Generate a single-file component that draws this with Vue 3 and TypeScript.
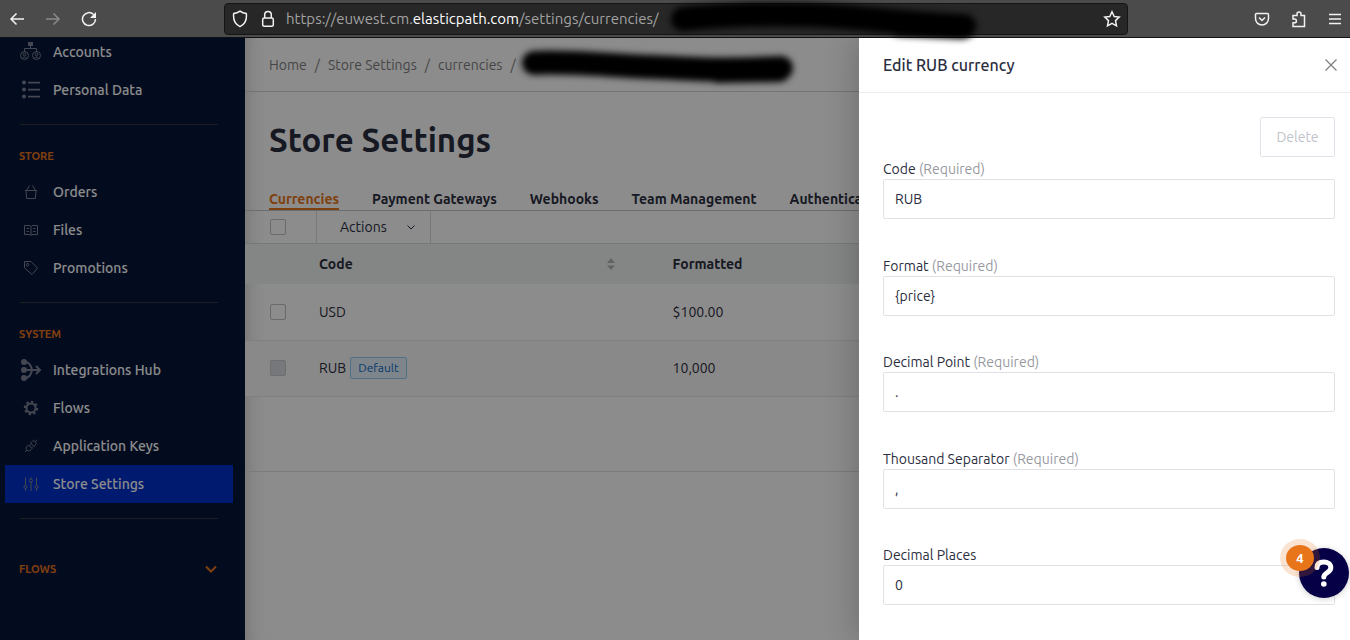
<script setup lang="ts">
import { ref } from 'vue'

interface NavItem { label: string; icon: string; active?: boolean }
interface NavGroup { title: string; items: NavItem[] }
interface Field { id: string; label: string; required: boolean; value: string }
interface Row { code: string; formatted: string; isDefault: boolean }

const groups: NavGroup[] = [
  { title: '', items: [
    { label: 'Accounts', icon: 'accounts' },
    { label: 'Personal Data', icon: 'list' },
  ] },
  { title: 'STORE', items: [
    { label: 'Orders', icon: 'basket' },
    { label: 'Files', icon: 'book' },
    { label: 'Promotions', icon: 'tag' },
  ] },
  { title: 'SYSTEM', items: [
    { label: 'Integrations Hub', icon: 'hub' },
    { label: 'Flows', icon: 'gear' },
    { label: 'Application Keys', icon: 'plug' },
    { label: 'Store Settings', icon: 'sliders', active: true },
  ] },
]

const crumbs = ['Home', 'Store Settings', 'currencies']
const tabs = ['Currencies', 'Payment Gateways', 'Webhooks', 'Team Management', 'Authentication']
const rows: Row[] = [
  { code: 'USD', formatted: '$100.00', isDefault: false },
  { code: 'RUB', formatted: '10,000', isDefault: true },
]
const fields = ref<Field[]>([
  { id: 'code', label: 'Code', required: true, value: 'RUB' },
  { id: 'format', label: 'Format', required: true, value: '{price}' },
  { id: 'decimal-point', label: 'Decimal Point', required: true, value: '.' },
  { id: 'thousand-separator', label: 'Thousand Separator', required: true, value: ',' },
  { id: 'decimal-places', label: 'Decimal Places', required: false, value: '0' },
])
</script>

<template>
  <div class="window">
    <header class="browser">
      <div class="browser-nav">
        <button type="button" aria-label="Back">
          <svg width="16" height="16" viewBox="0 0 16 16"><path d="M15 8H2M7.500 2.500 2 8l5.500 5.500" /></svg>
        </button>
        <button type="button" class="faded" aria-label="Forward">
          <svg width="16" height="16" viewBox="0 0 16 16"><path d="M1 8h13M8.500 2.500 14 8l-5.500 5.500" /></svg>
        </button>
        <button type="button" aria-label="Reload">
          <svg width="16" height="16" viewBox="0 0 16 16"><path d="M12.600 3.500A6.500 6.500 0 1 0 14.500 8" /><path class="solid" d="M15 1v6H9z" /></svg>
        </button>
      </div>
      <div class="address">
        <svg width="16" height="18" viewBox="0 0 16 18"><path d="M8 1.200c2 1.500 4 2.200 6.300 2.400.6 5-.8 10.500-6.300 13C2.500 14.100 1.100 8.600 1.700 3.600 4 3.400 6 2.700 8 1.200z" /></svg>
        <svg class="lock" width="14" height="18" viewBox="0 0 14 18"><rect x="1.700" y="8" width="10.600" height="8.300" rx="1.500" /><path d="M3.700 8V4.800a3.300 3.300 0 0 1 6.600 0V8" /></svg>
        <span class="url">https://euwest.cm.<b>elasticpath.com</b>/settings/currencies/</span>
        <svg class="redaction url-redaction" width="320" height="30" viewBox="0 0 320 30">
          <path d="M13 15C60 10 100 10 140 11S240 20 294 22" />
          <path d="M230 20 292 23" />
        </svg>
        <button type="button" class="star" aria-label="Bookmark">
          <svg width="18" height="18" viewBox="0 0 18 18"><path d="m9 1.800 2.200 4.700 5 .6-3.700 3.500 1 5.200L9 13.300l-4.500 2.500 1-5.200L1.800 7.100l5-.6z" /></svg>
        </button>
      </div>
      <div class="browser-tools">
        <button type="button" aria-label="Save to Pocket">
          <svg width="16" height="16" viewBox="0 0 16 16"><path d="M2.500 2.500h11a1 1 0 0 1 1 1v4a6.500 6.500 0 0 1-13 0v-4a1 1 0 0 1 1-1z" /><path d="m5 6.500 3 3 3-3" /></svg>
        </button>
        <button type="button" aria-label="Extensions">
          <svg width="16" height="18" viewBox="0 0 16 18"><path d="M2 5.500h4V4a2 2 0 0 1 4 0v1.500h3.500v11H2v-3.700h1.500a1.900 1.900 0 0 0 0-3.800H2z" /></svg>
        </button>
        <button type="button" aria-label="Menu">
          <svg width="14" height="16" viewBox="0 0 14 16"><path d="M1 3.500h12M1 8h12M1 12.500h12" /></svg>
        </button>
      </div>
    </header>

    <div class="app">
      <aside class="sidebar">
        <nav>
          <section v-for="group in groups" :key="group.title" class="group">
            <h2 v-if="group.title">{{ group.title }}</h2>
            <a v-for="item in group.items" :key="item.label" href="#" :class="{ active: item.active }">
              <svg v-if="item.icon === 'accounts'" width="22" height="22" viewBox="0 0 22 22"><path class="solid" d="M8 1h5v4H8z" /><path d="M10.500 5v3M4.500 11V7.500h12V11" /><circle cx="4.500" cy="14.500" r="4" /><circle cx="16.500" cy="14.500" r="4" /><circle cx="4.500" cy="13.500" r="1.300" /><circle cx="16.500" cy="13.500" r="1.300" /><path d="M2.300 17.500c1-1.900 3.400-1.900 4.400 0M14.300 17.500c1-1.900 3.400-1.900 4.400 0" /></svg>
              <svg v-else-if="item.icon === 'list'" width="22" height="22" viewBox="0 0 22 22"><g class="solid"><circle cx="4" cy="3.500" r="2" /><circle cx="4" cy="10.500" r="2" /><circle cx="4" cy="17.500" r="2" /><path d="M8 2.800h12v1.600H8zM8 9.800h12v1.600H8zM8 16.800h12v1.600H8z" /></g></svg>
              <svg v-else-if="item.icon === 'basket'" width="22" height="22" viewBox="0 0 22 22"><path d="M6.500 9.500 9.500 4.500M15.500 9.500 12.500 4.500M5 9.500h12M6 10l.7 7.500h8.600l.7-7.500" /></svg>
              <svg v-else-if="item.icon === 'book'" width="22" height="22" viewBox="0 0 22 22"><path d="M4.500 6.500H10l1 1 1-1h5.500v9H12l-1 1-1-1H4.500zM11 7.500v9M6.500 9.500H9M6.500 12.500H9M13 9.500h2.500M13 12.500h2.500" /></svg>
              <svg v-else-if="item.icon === 'tag'" width="22" height="22" viewBox="0 0 22 22"><path d="M4.500 4.500H11l6.500 6.700L12 17.500 4.500 11z" /><circle cx="7.500" cy="7.700" r="1.300" /></svg>
              <svg v-else-if="item.icon === 'hub'" class="hub" width="22" height="24" viewBox="0 0 22 24"><g class="solid"><circle cx="4" cy="4" r="3" /><circle cx="4" cy="12" r="3" /><circle cx="4" cy="20" r="3" /></g><path d="M5 4c4 0 6 3 7 8-1 5-3 8-7 8M5 12h15M16 8l4 4-4 4" /></svg>
              <svg v-else-if="item.icon === 'gear'" class="gear" width="22" height="22" viewBox="0 0 22 22"><circle cx="11" cy="11" r="4.500" /><circle class="teeth" cx="11" cy="11" r="6.200" pathLength="16" /></svg>
              <svg v-else-if="item.icon === 'plug'" width="22" height="22" viewBox="0 0 22 22"><path d="m5 17 2-2M15.300 6.700l2-2M7 15c-2-2 0-4 1.500-5l3.500 3.500c-1 1.500-3 3.500-5 1.500zM15.300 6.700c2 2 0 3.600-1.300 4.800L10.500 8c1.200-1.300 2.800-3.300 4.800-1.300zM9.500 11l1.500-1.500M11.500 13l1.500-1.500" /></svg>
              <svg v-else width="22" height="22" viewBox="0 0 22 22"><path d="M5.500 4.500v8M5.500 15.500v2.500M11 4.500v1.500M11 9v9M16.500 4.500v8M16.500 15.500v2.500" /><circle cx="5.500" cy="14" r="1.500" /><circle cx="11" cy="7.500" r="1.500" /><circle cx="16.500" cy="14" r="1.500" /></svg>
              <span>{{ item.label }}</span>
            </a>
          </section>
          <button type="button" class="expander" aria-expanded="false">
            <span>FLOWS</span>
            <svg width="14" height="14" viewBox="0 0 14 14"><path d="m2 4.500 5 5 5-5" /></svg>
          </button>
        </nav>
      </aside>

      <main class="content">
        <ol class="crumbs">
          <li v-for="crumb in crumbs" :key="crumb"><a href="#">{{ crumb }}</a><i>/</i></li>
        </ol>
        <h1>Store Settings</h1>
        <nav class="tabs">
          <a v-for="(tab, i) in tabs" :key="tab" href="#" :class="{ current: i === 0 }">{{ tab }}</a>
        </nav>
        <div class="toolbar">
          <label class="select-all"><input type="checkbox" aria-label="Select all"></label>
          <button type="button" class="actions">
            <span>Actions</span>
            <svg width="10" height="10" viewBox="0 0 10 10"><path d="m1.500 3.500 3.500 3.500 3.500-3.500" /></svg>
          </button>
        </div>
        <table>
          <colgroup><col class="col-check"><col class="col-code"><col></colgroup>
          <thead>
            <tr>
              <th aria-label="Selection"></th>
              <th scope="col">
                <div class="sortable">
                  <span>Code</span>
                  <svg width="10" height="14" viewBox="0 0 10 14"><path d="M5 1 9 6H1zM5 13 1 8.500h8z" /></svg>
                </div>
              </th>
              <th scope="col">Formatted</th>
            </tr>
          </thead>
          <tbody>
            <tr v-for="row in rows" :key="row.code" :class="{ preset: row.isDefault }">
              <td class="check"><input type="checkbox" :aria-label="'Select ' + row.code" :disabled="row.isDefault"></td>
              <td><div class="code">{{ row.code }}<span v-if="row.isDefault" class="badge">Default</span></div></td>
              <td>{{ row.formatted }}</td>
            </tr>
          </tbody>
        </table>
        <div class="table-foot"></div>
      </main>

      <div class="mask"></div>
      <svg class="redaction crumb-redaction" width="290" height="50" viewBox="0 0 290 50">
        <path d="M21 22C50 20 90 24 140 26S200 30 268 27" />
        <path d="M205 30 266 29" />
      </svg>

      <aside class="drawer" role="dialog" aria-label="Edit RUB currency">
        <header>
          <h2>Edit RUB currency</h2>
          <button type="button" aria-label="Close">
            <svg width="14" height="14" viewBox="0 0 14 14"><path d="m1.500 1.500 11 11M12.500 1.500l-11 11" /></svg>
          </button>
        </header>
        <form @submit.prevent>
          <button type="button" class="delete" disabled>Delete</button>
          <div class="fields">
            <div v-for="field in fields" :key="field.id" class="field">
              <label :for="field.id">{{ field.label }} <span v-if="field.required">(Required)</span></label>
              <input :id="field.id" v-model="field.value" type="text">
            </div>
          </div>
        </form>
      </aside>

      <button type="button" class="help" aria-label="Help">
        <svg width="26" height="32" viewBox="0 0 26 32"><path d="M6 10.500C6 6.500 9 5 12.800 5c4 0 7 2 7 5.700 0 5-7 5-7 9.300" /><circle cx="12.800" cy="27" r="2.800" /></svg>
        <span class="count">4</span>
      </button>
    </div>
  </div>
</template>

<style>
body {
  margin: 0;
}
</style>

<style scoped>
.window {
  display: flex;
  flex-direction: column;
  height: 100vh;
  min-height: 640px;
  overflow: hidden;
  font: 14px/20px Ubuntu, "Noto Sans", sans-serif;
  color: #2b2e3e;
}
.window *, .window *::before {
  box-sizing: border-box;
}
button {
  padding: 0;
  border: 0;
  background: none;
  font: inherit;
  color: inherit;
}
a {
  color: inherit;
  text-decoration: none;
}
svg {
  display: block;
  flex: none;
  fill: none;
  stroke: currentColor;
}
.solid {
  fill: currentColor;
  stroke: none;
}

.browser {
  display: flex;
  align-items: center;
  height: 38px;
  flex: none;
  padding: 0 8px 0 9px;
  border-bottom: 1px solid #111;
  background: #4b4b4b;
  color: #f2f2f2;
  stroke-width: 1.5;
  position: relative;
  z-index: 1;
}
.browser-nav {
  display: flex;
  gap: 20px;
  width: 215px;
}
.faded {
  color: #8a8a8a;
}
.address {
  display: flex;
  align-items: center;
  flex: 1;
  height: 32px;
  padding: 0 6px 0 7px;
  border: 1px solid #151515;
  border-radius: 4px;
  background: #272727;
}
.lock {
  margin: 0 11px 0 13px;
}
.url {
  font-size: 15px;
  color: #a3a3a3;
  white-space: nowrap;
}
.url b {
  font-weight: 400;
  color: #fff;
}
.redaction {
  overflow: visible;
  stroke: #000;
  stroke-width: 24;
  stroke-linecap: round;
  filter: blur(3px);
}
.url-redaction {
  margin-left: 12px;
}
.star {
  margin-left: auto;
}
.browser-tools {
  display: flex;
  align-items: center;
  gap: 21px;
  padding-left: 126px;
}

.app {
  display: flex;
  flex: 1;
  min-height: 0;
  position: relative;
}
.sidebar {
  width: 245px;
  flex: none;
  overflow: hidden;
  background: #06163a;
  color: #fff;
}
.sidebar nav {
  margin-top: -5px;
}
.group {
  padding-bottom: 15px;
}
.group + .group, .expander {
  position: relative;
}
.group + .group::before, .expander::before {
  content: "";
  position: absolute;
  top: 0;
  left: 20px;
  right: 27px;
  border-top: 1px solid #34363a;
}
.group h2 {
  margin: 0;
  padding: 23px 19px 8px;
  font-size: 11px;
  line-height: 18px;
  font-weight: 700;
  color: #e8751a;
}
.group a {
  display: flex;
  align-items: center;
  gap: 11px;
  height: 38px;
  margin: 0 12px 0 5px;
  padding-left: 15px;
  font-weight: 500;
}
.group a.active {
  background: #0030cc;
}
.group a svg {
  width: 22px;
  color: #7d8294;
}
.hub, .gear {
  stroke-width: 2;
}
.teeth {
  stroke-dasharray: 1 1;
}
.expander {
  display: flex;
  align-items: center;
  justify-content: space-between;
  width: 100%;
  padding: 41px 27px 0 19px;
  font-size: 11px;
  font-weight: 700;
  color: #e8751a;
}
.expander svg {
  stroke-width: 2;
}

.content {
  flex: 1;
  min-width: 0;
  overflow: hidden;
  background: #fff;
  box-shadow: inset 18px 0 18px -16px rgba(0, 0, 0, 0.2);
}
.crumbs {
  display: flex;
  gap: 8px;
  margin: 0;
  padding: 17px 24px 16px;
  border-bottom: 1px solid #d4d4d4;
  list-style: none;
  color: #7f7f7f;
}
.crumbs li {
  display: flex;
  gap: 8px;
}
.crumbs i {
  font-style: normal;
}
h1 {
  margin: 0;
  padding: 28px 24px 30px;
  font-size: 33px;
  line-height: 40px;
  font-weight: 700;
  white-space: nowrap;
}
.tabs {
  display: flex;
  gap: 33px;
  padding: 0 24px;
  border-bottom: 1px solid #c4c6ca;
  font-weight: 700;
  white-space: nowrap;
}
.tabs .current {
  color: #e8751a;
  border-bottom: 2px solid #e8751a;
}
.tabs a {
  line-height: 18px;
}
.toolbar {
  display: flex;
  height: 33px;
  border-bottom: 1px solid #d9dbdf;
}
.select-all {
  display: flex;
  align-items: center;
  width: 71px;
  padding-left: 25px;
}
input[type="checkbox"] {
  appearance: none;
  display: block;
  width: 16px;
  height: 16px;
  margin: 0;
  border: 1px solid #c2c2c2;
  border-radius: 2px;
}
input[type="checkbox"]:disabled {
  border-color: #c8c8cc;
  background: #d8dae2;
}
.actions {
  display: flex;
  align-items: center;
  justify-content: space-between;
  width: 115px;
  padding: 0 14px 0 23px;
  border: 1px solid #d9dbdf;
  border-width: 0 1px;
}
table {
  width: 100%;
  border-collapse: collapse;
  table-layout: fixed;
}
.col-check {
  width: 58px;
}
.col-code {
  width: 32%;
}
th, td {
  padding: 0 16px;
  text-align: left;
}
th {
  height: 40px;
  background: #f0f2f3;
  font-weight: 700;
}
td {
  height: 56px;
  border-bottom: 1px solid #e8e8e8;
}
.check {
  padding: 0 0 0 25px;
}
.preset {
  background: #fafafa;
}
.sortable {
  display: flex;
  align-items: center;
  justify-content: space-between;
  padding-right: 25px;
}
.sortable svg {
  fill: #b4b4b4;
  stroke: none;
}
.code {
  display: flex;
  align-items: center;
  gap: 4px;
}
.badge {
  padding: 0 7px;
  border: 1px solid #8fccf8;
  border-radius: 2px;
  background: #e6f4fd;
  font-size: 12px;
  color: #0e6ac8;
}
.table-foot {
  height: 75px;
  border-bottom: 1px solid #e0e0e0;
}

.mask {
  position: absolute;
  inset: 0;
  background: rgba(0, 0, 0, 0.45);
}
.crumb-redaction {
  position: absolute;
  top: 3px;
  left: 513px;
}
.drawer {
  position: absolute;
  inset: 0 0 0 auto;
  display: flex;
  flex-direction: column;
  width: 491px;
  background: #fff;
  box-shadow: -6px 0 28px rgba(0, 0, 0, 0.18);
}
.drawer header {
  display: flex;
  align-items: center;
  justify-content: space-between;
  height: 55px;
  flex: none;
  padding: 0 12px 0 24px;
  border-bottom: 1px solid #ececec;
}
.drawer header svg {
  stroke-width: 1.2;
  color: #7d7d7d;
}
.drawer h2 {
  margin: 0;
  font-size: 16px;
  font-weight: 500;
}
.drawer form {
  display: flex;
  flex: 1;
  flex-direction: column;
  padding: 24px 15px 35px 24px;
}
.delete {
  align-self: flex-end;
  width: 75px;
  height: 40px;
  margin-bottom: 2px;
  border: 1px solid #e0e3e9;
  border-radius: 2px;
  color: #bfc3ca;
}
.fields {
  display: flex;
  flex: 1;
  flex-direction: column;
  justify-content: space-between;
}
.field label {
  display: block;
}
.field label span {
  color: #97999f;
}
.field input {
  display: block;
  width: 100%;
  height: 40px;
  padding: 0 11px;
  border: 1px solid #dfe1e7;
  border-radius: 2px;
  background: #fff;
  font: inherit;
  color: inherit;
}

.help {
  position: absolute;
  right: 1px;
  bottom: 42px;
  display: grid;
  place-items: center;
  width: 50px;
  height: 50px;
  border-radius: 50%;
  background: #060046;
  color: #fff;
  box-shadow: 0 1px 6px rgba(0, 0, 0, 0.2);
}
.help svg {
  stroke-width: 5;
  stroke-linecap: round;
}
.help circle {
  fill: #fff;
  stroke: none;
}
.count {
  position: absolute;
  top: -3px;
  left: -13px;
  width: 28px;
  height: 26px;
  border-radius: 50%;
  background: #e8751a;
  box-shadow: 0 0 0 6px rgba(232, 117, 26, 0.2);
  font-size: 13px;
  line-height: 26px;
  font-weight: 600;
}
</style>
